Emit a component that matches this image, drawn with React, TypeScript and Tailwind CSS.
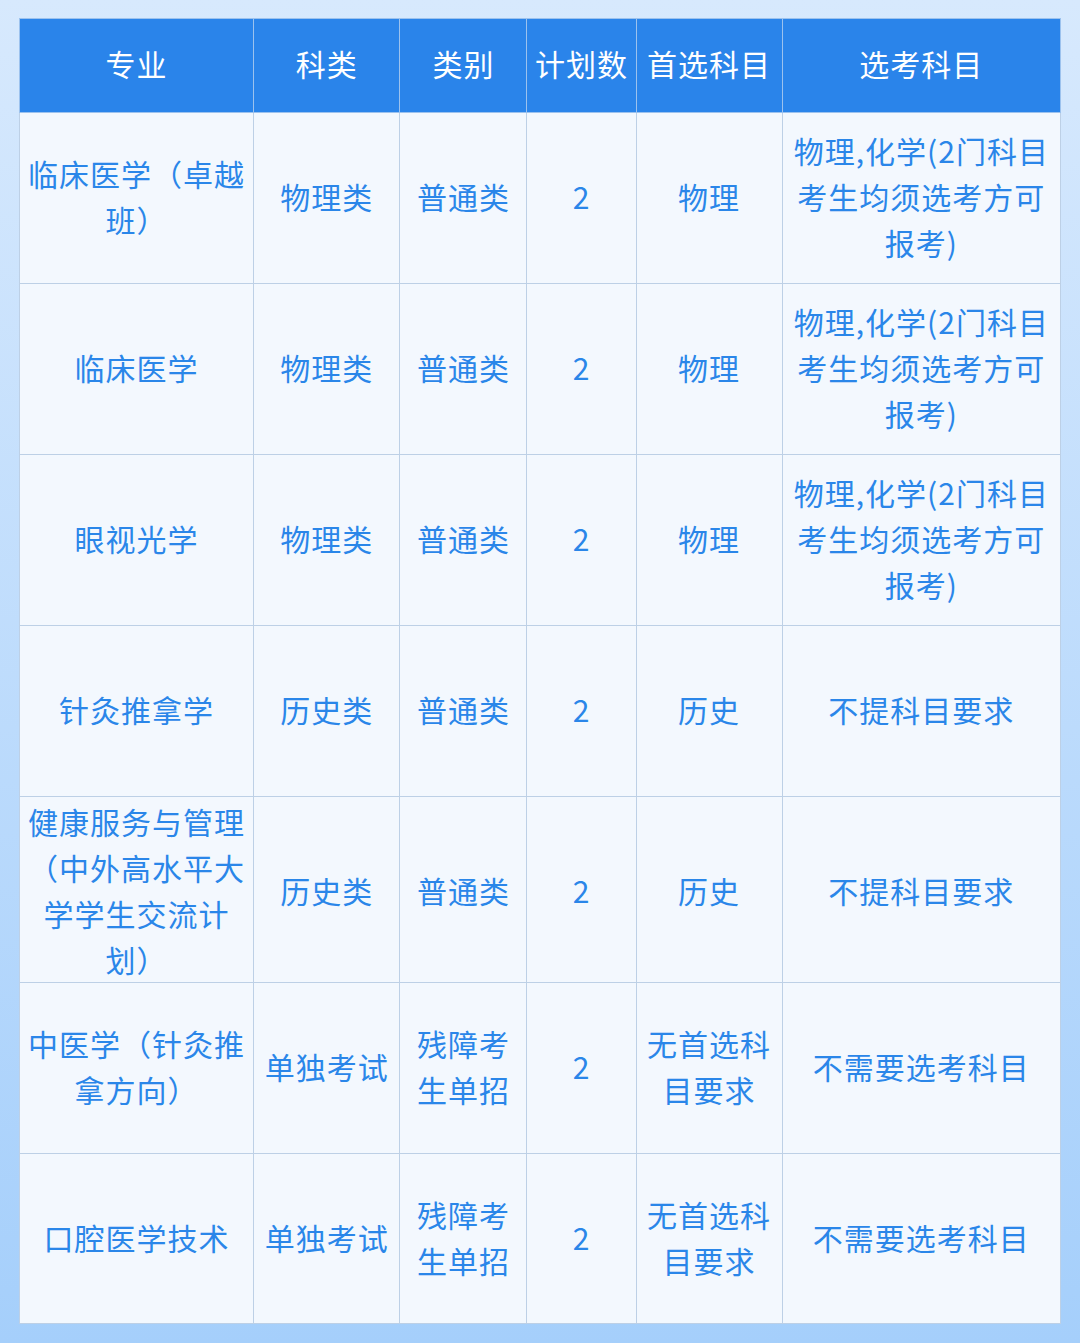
import React from "react";

const widths = ["w-[234px]", "w-[146px]", "w-[127px]", "w-[109px]", "w-[146px]", "w-[278px]"];

const headers = ["专业", "科类", "类别", "计划数", "首选科目", "选考科目"];

type Row = { h: string; pb: string; cells: string[][] };

const req = ["物理,化学(2门科目", "考生均须选考方可", "报考)"];

const rows: Row[] = [
  { h: "h-[171px]", pb: "pb-[4px]", cells: [["临床医学（卓越", "班）"], ["物理类"], ["普通类"], ["2"], ["物理"], req] },
  { h: "h-[171px]", pb: "pb-[4px]", cells: [["临床医学"], ["物理类"], ["普通类"], ["2"], ["物理"], req] },
  { h: "h-[171px]", pb: "pb-[4px]", cells: [["眼视光学"], ["物理类"], ["普通类"], ["2"], ["物理"], req] },
  { h: "h-[171px]", pb: "pb-[4px]", cells: [["针灸推拿学"], ["历史类"], ["普通类"], ["2"], ["历史"], ["不提科目要求"]] },
  {
    h: "h-[186px]",
    pb: "pb-0",
    cells: [
      ["健康服务与管理", "（中外高水平大", "学学生交流计", "划）"],
      ["历史类"],
      ["普通类"],
      ["2"],
      ["历史"],
      ["不提科目要求"],
    ],
  },
  {
    h: "h-[171px]",
    pb: "pb-[4px]",
    cells: [["中医学（针灸推", "拿方向）"], ["单独考试"], ["残障考", "生单招"], ["2"], ["无首选科", "目要求"], ["不需要选考科目"]],
  },
  {
    h: "h-[170px]",
    pb: "pb-[4px]",
    cells: [["口腔医学技术"], ["单独考试"], ["残障考", "生单招"], ["2"], ["无首选科", "目要求"], ["不需要选考科目"]],
  },
];

export default function App() {
  return (
    <div
      className="w-[1080px] h-[1343px] bg-gradient-to-b from-[#d7e9fd] to-[#a5cffb] pt-[18px] pl-[19px]"
      style={{ fontFamily: '"Noto Sans CJK SC", "Noto Sans", sans-serif' }}
    >
      <table className="border-collapse table-fixed w-[1042px]">
        <thead>
          <tr className="h-[94px] bg-[#2a84ea]">
            {headers.map((h, i) => (
              <th
                key={i}
                className={`${widths[i]} border border-[#9cc2ee] text-white text-[30px] font-normal text-center align-middle p-0 pb-[4px] tracking-[1px]`}
              >
                {h}
              </th>
            ))}
          </tr>
        </thead>
        <tbody>
          {rows.map((r, ri) => (
            <tr key={ri} className={`${r.h} bg-[#f3f8fe]`}>
              {r.cells.map((c, ci) => (
                <td
                  key={ci}
                  className={`${r.pb} border border-[#bdd0e6] text-[#2a86e9] text-[30px] leading-[46px] text-center align-middle px-0 pt-0 tracking-[1px]`}
                >
                  {c.map((line, li) => (
                    <div key={li}>{line}</div>
                  ))}
                </td>
              ))}
            </tr>
          ))}
        </tbody>
      </table>
    </div>
  );
}
